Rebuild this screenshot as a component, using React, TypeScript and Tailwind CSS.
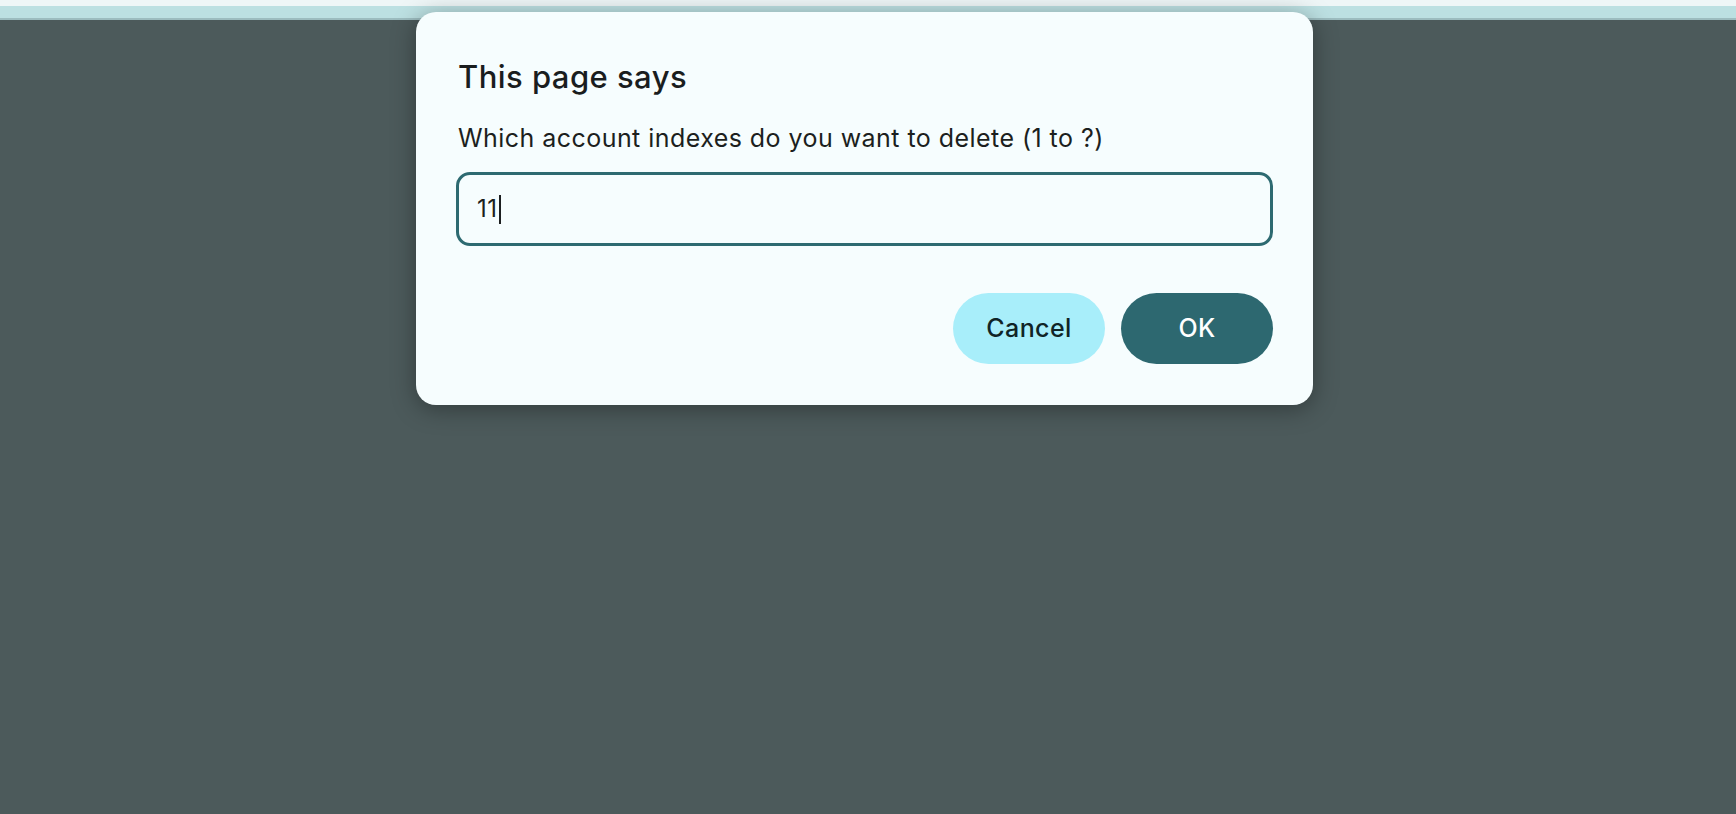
export default function App() {
  return (
    <div className="relative min-h-screen w-full bg-[#4c5a5b] font-['Inter','Liberation_Sans',sans-serif]">
      {/* browser-ish top strip behind the dialog */}
      <div className="h-[6px] bg-[#eef6f7]" />
      <div className="h-[12px] bg-[#bce0e2]" />
      <div className="h-[2px] bg-[#9cbcbf]" />

      {/* prompt dialog */}
      <div className="absolute left-[416px] top-[12px] w-[897px] rounded-[20px] bg-[#f6fdfe] px-[40px] pt-[47px] pb-[41px] shadow-[0_4px_24px_rgba(0,0,0,0.35)]">
        <h1 className="ml-[2px] text-[31px] leading-[36px] font-medium text-[#1a1d1e] tracking-[0.45px]">This page says</h1>
        <p className="ml-[2px] mt-[27px] text-[25px] leading-[32px] text-[#1c1f20] tracking-[0.45px]">
          Which account indexes do you want to delete (1 to ?)
        </p>
        <div className="mt-[18px] flex h-[74px] items-center rounded-[14px] border-[3px] border-[#2d6a71] pl-[18px]">
          <span className="text-[24px] text-[#1c1f20] tracking-[0.5px]">11</span>
          <span className="ml-[1px] h-[29px] w-[2px] bg-[#1c1f20]" />
        </div>
        <div className="mt-[47px] flex justify-end gap-[16px]">
          <button className="h-[71px] w-[152px] rounded-full bg-[#a8eefa] text-[25px] font-medium tracking-[0.4px] text-[#102426]">
            Cancel
          </button>
          <button className="h-[71px] w-[152px] rounded-full bg-[#2d6870] text-[25px] font-medium tracking-[0.4px] text-white">
            OK
          </button>
        </div>
      </div>
    </div>
  );
}
